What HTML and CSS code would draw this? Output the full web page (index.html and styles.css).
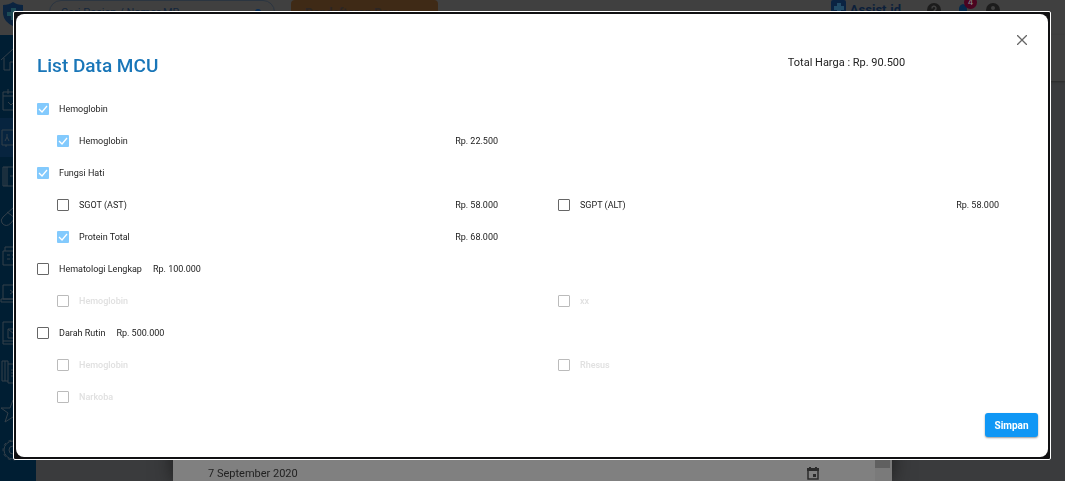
FILE: index.html
```html
<!DOCTYPE html>
<html lang="id">

<head>
    <meta charset="UTF-8">
    <meta name="viewport" content="width=device-width, initial-scale=1">
    <title>Assist.id - List Data MCU</title>
    <link rel="stylesheet" href="styles.css">
</head>

<body>

    <header class="topbar">
        <a class="shield" href="#" aria-label="Home">
            <svg width="20" height="24" viewBox="0 0 20 24"><path d="M0 3Q6 3 10 0Q14 3 20 3V12Q19 20 10 24Q1 20 0 12Z" fill="#0b2440"/><path d="M8 6h5v4h4v4h-4v4H8v-4H4v-4h4z" fill="#1c4a55"/></svg>
        </a>
        <div class="search">
            <input type="text" class="search-input" placeholder="Cari Pasien / Nomor MR" aria-label="Cari Pasien">
            <svg width="8" height="8" viewBox="0 0 8 8"><circle cx="4" cy="4" r="3" fill="#082c55"/></svg>
        </div>
        <button type="button" class="register">Pendaftaran Baru</button>
        <div class="tools">
            <a class="brand" href="#">
                <svg width="15" height="16" viewBox="0 0 15 16"><rect width="15" height="16" rx="2" fill="#0a2342"/><path d="M6 3h4v3h3v4h-3v3H6v-3H3V6h3z" fill="#214b66"/></svg>
                <span>Assist.id</span>
            </a>
            <svg class="tool-icon" width="14" height="14" viewBox="0 0 14 14"><circle cx="7" cy="7" r="7" fill="#1c1c1c"/><path d="M5 5.500a2 2 0 1 1 3 1.500Q7 7.500 7 9M7 10v2" fill="none" stroke="#404040" stroke-width="1.500"/></svg>
            <div class="bell">
                <svg width="10" height="14" viewBox="0 0 10 14"><path d="M5 1Q9 2 9 6v4l1 1H0l1-1V6Q1 2 5 1z" fill="#06294a"/></svg>
                <span class="count">4</span>
            </div>
            <svg class="tool-icon" width="14" height="14" viewBox="0 0 14 14"><circle cx="7" cy="7" r="7" fill="#1c1c1c"/><circle cx="7" cy="5" r="2" fill="#404040"/><path d="M3 11q4-4 8 0z" fill="#404040"/></svg>
        </div>
    </header>

    <div class="page">
        <nav class="sidebar">
            <a href="#" class="menu" aria-label="Beranda"><svg viewBox="0 0 26 26"><path d="M1 13L13 2l12 11M4 11v12h6v-8h5v8h8V11"/></svg></a>
            <a href="#" class="menu" aria-label="Jadwal"><svg viewBox="0 0 26 26"><path d="M3 6h20v18H3zM3 10h20M8 3v5M18 3v5M8 16l3 3 6-6"/></svg></a>
            <a href="#" class="menu active" aria-label="Pasien"><svg viewBox="0 0 26 26"><path d="M2 5h22v15H2zM5 16l2-4 2 4M7 9v3M13 11h6M13 14h6M6 20v2"/></svg></a>
            <a href="#" class="menu" aria-label="Rekam Medis"><svg viewBox="0 0 26 26"><path d="M3 3h20v19H3zM7 3v19M5 3v19M14 9v7M10 12h7"/></svg></a>
            <a href="#" class="menu" aria-label="Obat"><svg viewBox="0 0 26 26"><path d="M3 14L14 4q6-3 7 3L11 20q-5 5-9 0-2-3 1-6zM7 9l8 6"/></svg></a>
            <a href="#" class="menu" aria-label="Kasir"><svg viewBox="0 0 26 26"><path d="M3 9h20v14H3zM5 9V5h9v4M7 13h3M12 13h3M7 17h3M12 17h3"/></svg></a>
            <a href="#" class="menu" aria-label="Laporan"><svg viewBox="0 0 26 26"><path d="M3 4h20v14H3zM1 18h24v3H1zM10 9l3 2-3 2"/></svg></a>
            <a href="#" class="menu" aria-label="Pesan"><svg viewBox="0 0 26 26"><path d="M3 2h20v22H3zM3 21h20M8 9h12v9H8zM8 9l6 5 6-5"/></svg></a>
            <a href="#" class="menu" aria-label="Dokumen"><svg viewBox="0 0 26 26"><path d="M8 5V2H2v20h6M5 2v20M8 5h15v19H8zM11 11h8M11 14h8M11 17h8"/></svg></a>
            <a href="#" class="menu" aria-label="Favorit"><svg viewBox="0 0 26 26"><path d="M13 2l3 8h9l-7 5 3 9-8-5-8 5 3-9-7-5h9z"/></svg></a>
            <a href="#" class="menu" aria-label="Pengaturan"><svg viewBox="0 0 26 26"><circle cx="13" cy="13" r="9"/><circle cx="13" cy="13" r="10" stroke-dasharray="3 3"/><circle cx="13" cy="13" r="4"/></svg></a>
        </nav>
        <main class="content">
            <div class="subbar"></div>
        </main>
    </div>

    <!-- registration form, stays open under the dialog -->
    <div class="layer form-layer">
        <section class="form-panel">
            <div class="form-body">
                <label class="date-label" for="tanggal">Tanggal</label>
                <div class="date-row">
                    <input type="text" id="tanggal" class="date-input" value="7 September 2020">
                    <svg width="12" height="13" viewBox="0 0 12 13"><path d="M1 2h10v10H1z" fill="none" stroke="#2b2b2b" stroke-width="1.500"/><path d="M0 1h12v3H0zM6 7h3v3H6zM2 0h2v2H2zM8 0h2v2H8z" fill="#2b2b2b"/></svg>
                </div>
            </div>
            <div class="scrollbar"><div class="thumb"></div></div>
        </section>
    </div>

    <div class="layer modal-layer">
        <div class="modal" role="dialog" aria-labelledby="modal-title">
            <form class="modal-box">
                <button type="button" class="close" aria-label="Tutup">
                    <svg width="10" height="10" viewBox="0 0 10 10"><path d="M0 0l10 10M10 0L0 10" stroke="#666" stroke-width="1.300"/></svg>
                </button>
                <div class="modal-head">
                    <h1 id="modal-title">List Data MCU</h1>
                    <span class="total">Total Harga : Rp. 90.500</span>
                </div>

                <div class="group">
                    <div class="group-row"><label class="item"><input type="checkbox" checked>Hemoglobin</label></div>
                    <div class="children">
                        <div class="child"><label class="item"><input type="checkbox" checked>Hemoglobin</label><span>Rp. 22.500</span></div>
                    </div>
                </div>

                <div class="group">
                    <div class="group-row"><label class="item"><input type="checkbox" checked>Fungsi Hati</label></div>
                    <div class="children">
                        <div class="child"><label class="item"><input type="checkbox">SGOT (AST)</label><span>Rp. 58.000</span></div>
                        <div class="child"><label class="item"><input type="checkbox">SGPT (ALT)</label><span>Rp. 58.000</span></div>
                        <div class="child"><label class="item"><input type="checkbox" checked>Protein Total</label><span>Rp. 68.000</span></div>
                    </div>
                </div>

                <div class="group">
                    <div class="group-row"><label class="item"><input type="checkbox">Hematologi Lengkap</label><span>Rp. 100.000</span></div>
                    <div class="children">
                        <div class="child"><label class="item disabled"><input type="checkbox" disabled>Hemoglobin</label></div>
                        <div class="child"><label class="item disabled"><input type="checkbox" disabled>xx</label></div>
                    </div>
                </div>

                <div class="group">
                    <div class="group-row"><label class="item"><input type="checkbox">Darah Rutin</label><span>Rp. 500.000</span></div>
                    <div class="children">
                        <div class="child"><label class="item disabled"><input type="checkbox" disabled>Hemoglobin</label></div>
                        <div class="child"><label class="item disabled"><input type="checkbox" disabled>Rhesus</label></div>
                        <div class="child"><label class="item disabled"><input type="checkbox" disabled>Narkoba</label></div>
                    </div>
                </div>

                <div class="modal-foot">
                    <button type="submit" class="save">Simpan</button>
                </div>
            </form>
        </div>
    </div>

</body>

</html>
```
FILE: styles.css
```css
* {
    box-sizing: border-box;
}

body {
    margin: 0;
    height: 100vh;
    display: flex;
    flex-direction: column;
    overflow: hidden;
    font-family: Roboto, sans-serif;
    font-size: 9px;
    color: #222;
    background: #3a3b3d;
}

button,
input {
    font-family: inherit;
}

/* top bar */
.topbar {
    display: flex;
    align-items: flex-start;
    height: 35px;
    flex-shrink: 0;
    padding-left: 3px;
    background: #404040;
}

.shield {
    padding-top: 2px;
}

.search {
    display: flex;
    align-items: center;
    width: 226px;
    height: 24px;
    margin-left: 26px;
    padding: 0 12px 0 11px;
    border: 1px solid #2b3540;
    border-radius: 12px;
}

.search-input {
    flex: 1;
    min-width: 0;
    padding: 0;
    border: 0;
    background: none;
    font-size: 11px;
}

.search-input::placeholder {
    color: #14263c;
}

.register {
    width: 147px;
    height: 26px;
    margin-left: 16px;
    padding: 0 14px;
    border: 0;
    border-radius: 4px;
    background: #3f2a16;
    color: #2c2624;
    font-size: 12px;
    font-weight: 700;
    text-align: left;
}

.tools {
    display: flex;
    align-items: flex-start;
    margin-left: auto;
    padding-right: 65px;
}

.brand {
    display: flex;
    gap: 4px;
    margin-right: 26px;
    color: #0c1f3a;
    font-size: 13px;
    font-weight: 700;
    line-height: 20px;
    text-decoration: none;
}

.tool-icon {
    margin-top: 3px;
}

.bell {
    position: relative;
    margin: 3px 18px 0 17px;
}

.count {
    position: absolute;
    top: -7px;
    left: 6px;
    width: 13px;
    height: 13px;
    border-radius: 50%;
    background: #4a0420;
    color: #888;
    text-align: center;
    line-height: 13px;
}

/* page behind */
.page {
    flex: 1;
    display: flex;
    min-height: 0;
}

.sidebar {
    width: 36px;
    padding-top: 5px;
    background: #001e33;
}

.menu {
    display: flex;
    height: 39px;
    align-items: center;
}

.menu.active {
    background: #07243f;
}

.menu svg {
    width: 26px;
    height: 26px;
    fill: none;
    stroke: #34404a;
}

.content {
    flex: 1;
}

.subbar {
    height: 46px;
    background: #404040;
    box-shadow: 0 1px 2px #2a2a2a;
}

.layer {
    position: fixed;
    inset: 0;
    display: flex;
}

.form-layer {
    justify-content: center;
    align-items: flex-end;
}

.form-panel {
    display: flex;
    width: 719px;
    height: 60px;
    background: #808080;
    box-shadow: 0 0 18px #1c1c1c;
}

.form-body {
    flex: 1;
    padding: 26px 56px 0 35px;
}

.date-label {
    display: block;
    line-height: 14px;
    color: #163c78;
}

.date-row {
    display: flex;
    align-items: center;
    height: 24px;
}

.date-input {
    flex: 1;
    padding: 0;
    border: 0;
    background: none;
    color: #222;
    font-size: 11px;
}

.scrollbar {
    width: 17px;
    padding-right: 2px;
    background: #7a7a7a;
}

.thumb {
    height: 47px;
    background: #606060;
}

/* dialog */
.modal-layer {
    padding: 11px 14px 21px 13px;
}

.modal {
    flex: 1;
    display: flex;
    padding: 2px;
    border: 1px solid #fff;
    border-radius: 2px;
    background: #101012;
}

.modal-box {
    flex: 1;
    display: flex;
    flex-direction: column;
    padding: 19px 10px 20px 21px;
    border-radius: 8px;
    background: #fff;
}

.close {
    align-self: flex-end;
    display: flex;
    margin-right: 9px;
    padding: 2px;
    border: 0;
    background: none;
}

.modal-head {
    display: grid;
    grid-template-columns: 3fr 1fr;
    height: 24px;
    margin: 7px 0 15px;
}

.modal-head h1 {
    margin: 0;
    font-size: 19px;
    font-weight: 500;
    line-height: 24px;
    color: #1976b8;
}

.total {
    font-size: 11px;
    line-height: 18px;
}

.group-row,
.child {
    display: flex;
    align-items: center;
    height: 32px;
}

.group-row {
    gap: 11px;
}

.children {
    display: grid;
    grid-template-columns: 1fr 1fr;
    column-gap: 60px;
    padding: 0 39px 0 20px;
}

.child {
    justify-content: space-between;
}

.item {
    display: flex;
    align-items: center;
    gap: 10px;
}

.item input {
    appearance: none;
    width: 12px;
    height: 12px;
    margin: 0;
    border: 1px solid #666;
    border-radius: 1px;
}

.item input:checked {
    border: 0;
    background: #83cafd url("data:image/svg+xml,%3Csvg xmlns='http://www.w3.org/2000/svg' viewBox='0 0 12 12'%3E%3Cpath d='M2 6l3 3 5-6' fill='none' stroke='white' stroke-width='1.300'/%3E%3C/svg%3E");
}

.item.disabled {
    color: #e0e0e0;
    font-weight: 500;
}

.item input:disabled {
    border-color: #bbb;
}

.modal-foot {
    display: flex;
    justify-content: flex-end;
    margin-top: auto;
}

.save {
    width: 53px;
    height: 24px;
    padding: 0;
    border: 0;
    border-radius: 3px;
    background: #1097f5;
    box-shadow: 0 1px 2px #999;
    color: #fff;
    font-size: 10px;
    font-weight: 700;
}
```
